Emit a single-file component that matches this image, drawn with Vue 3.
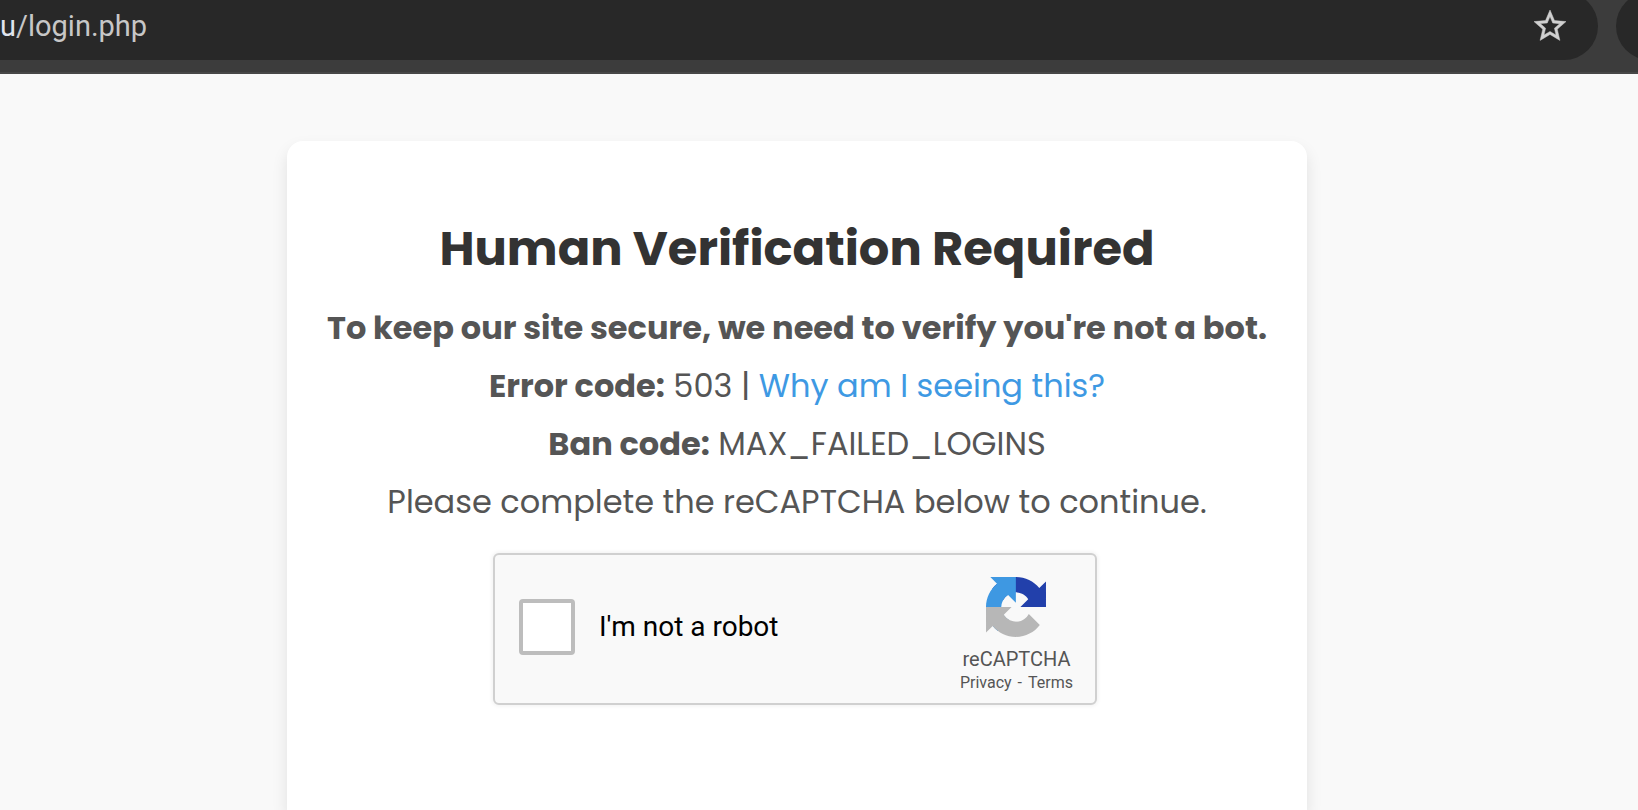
<script setup>
import { ref } from 'vue'

const checked = ref(false)
</script>

<template>
  <div class="window">
    <header class="toolbar">
      <div class="omnibox">
        <span class="url"><span class="host">u</span>/login.php</span>
        <button class="star" type="button" aria-label="Bookmark this tab">
          <svg viewBox="2 2 20 20" width="32" height="32" aria-hidden="true">
            <path
              fill="currentColor"
              stroke="currentColor"
              stroke-width="0.3"
              d="M22 9.24l-7.19-.62L12 2 9.19 8.63 2 9.24l5.46 4.73L5.82 21 12 17.27 18.18 21l-1.63-7.03L22 9.24zM12 15.4l-3.76 2.27 1-4.28-3.32-2.88 4.38-.38L12 6.1l1.71 4.04 4.38.38-3.32 2.88 1 4.28L12 15.4z"
            />
          </svg>
        </button>
      </div>
      <div class="next-pill"></div>
    </header>

    <main class="page">
      <section class="card">
        <h1>Human Verification Required</h1>
        <p><strong>To keep our site secure, we need to verify you're not a bot.</strong></p>
        <p><strong>Error code:</strong> 503 | <a href="#why">Why am I seeing this?</a></p>
        <p><strong>Ban code:</strong> MAX_FAILED_LOGINS</p>
        <p>Please complete the reCAPTCHA below to continue.</p>

        <div class="captcha-frame">
          <div class="captcha">
            <input id="robot" v-model="checked" type="checkbox" />
            <label for="robot">I'm not a robot</label>
            <div class="brand">
              <svg viewBox="0 0 64 64" width="60" height="60" aria-hidden="true">
                <path
                  fill="#2240ab"
                  d="M64 31.955l-.033-1.37V4.687l-7.16 7.16C50.948 4.674 42.033.093 32.05.093c-10.4 0-19.622 4.96-25.458 12.64l11.736 11.86a15.55 15.55 0 0 1 4.754-5.334c2.05-1.6 4.952-2.906 8.968-2.906.485 0 .86.057 1.135.163 4.976.393 9.288 3.14 11.828 7.124l-8.307 8.307L64 31.953"
                />
                <path
                  fill="#3e98e2"
                  d="M31.862.094l-1.37.033H4.594l7.16 7.16C4.58 13.147 0 22.06 0 32.046c0 10.4 4.96 19.622 12.64 25.458L24.5 45.768a15.55 15.55 0 0 1-5.334-4.754c-1.6-2.05-2.906-4.952-2.906-8.968 0-.485.057-.86.163-1.135.393-4.976 3.14-9.288 7.124-11.828l8.307 8.307L31.86.095"
                />
                <path
                  fill="#b7b7b7"
                  d="M.001 32.045l.033 1.37v25.898l7.16-7.16c5.86 7.173 14.774 11.754 24.76 11.754 10.4 0 19.622-4.96 25.458-12.64l-11.736-11.86a15.55 15.55 0 0 1-4.754 5.334c-2.05 1.6-4.952 2.906-8.968 2.906-.485 0-.86-.057-1.135-.163-4.976-.393-9.288-3.14-11.828-7.124l8.307-8.307c-10.522.04-22.4.066-27.295-.005"
                />
              </svg>
              <span class="name">reCAPTCHA</span>
              <span class="links"><a href="#privacy">Privacy</a><span aria-hidden="true">-</span><a href="#terms">Terms</a></span>
            </div>
          </div>
        </div>
      </section>
    </main>
  </div>
</template>

<style>
body {
  margin: 0;
  background: #f9f9f9;
}
</style>

<style scoped>
.window {
  display: flex;
  flex-direction: column;
  height: 100vh;
  overflow: hidden;
}

.toolbar {
  display: flex;
  flex: none;
  gap: 18px;
  height: 72px;
  overflow: hidden;
  background: #3c3c3c;
  border-bottom: 2px solid #474747;
}

.omnibox {
  display: flex;
  flex: 1;
  align-items: center;
  justify-content: space-between;
  box-sizing: border-box;
  height: 68px;
  margin-top: -8px;
  padding-right: 32px;
  background: #282828;
  border-radius: 0 34px 34px 0;
  color: #c7c7c7;
  font: 29px/32px Roboto, sans-serif;
}

.host {
  color: #e0e4ee;
}

.star {
  display: flex;
  padding: 0;
  border: 0;
  background: none;
  color: #d0d0d0;
}

.next-pill {
  flex: none;
  width: 68px;
  height: 68px;
  margin: -8px -46px 0 0;
  background: #282828;
  border-radius: 34px;
}

.page {
  display: flex;
  flex: 1;
  justify-content: center;
  padding: 67px 44px 0 0;
}

.card {
  box-sizing: border-box;
  width: 100%;
  max-width: 1020px;
  padding: 72px 32px 0;
  background: #fff;
  border-radius: 16px 16px 0 0;
  box-shadow: 0 8px 16px rgba(0, 0, 0, 0.1);
  color: #555;
  font: 32px/58px Poppins, Inter, sans-serif;
  text-align: center;
}

h1 {
  margin: 0 0 14px;
  color: #333;
  font-size: 48px;
  font-weight: 700;
  line-height: 72px;
}

p {
  margin: 0;
}

p a {
  color: #3e99e3;
  text-decoration: none;
}

.captcha-frame {
  width: 608px;
  margin: 22px auto 0;
}

.captcha {
  display: flex;
  align-items: center;
  box-sizing: border-box;
  width: 604px;
  height: 152px;
  padding: 0 22px 4px 24px;
  background: #f9f9f9;
  border: 2px solid #d0d0d0;
  border-radius: 6px;
  box-shadow: 0 0 4px 1px rgba(0, 0, 0, 0.06);
  font-family: Roboto, sans-serif;
}

.captcha input {
  appearance: none;
  box-sizing: border-box;
  width: 56px;
  height: 56px;
  margin: 0 24px 0 0;
  background: #fff;
  border: 4px solid #bdbdbd;
  border-radius: 4px;
}

.captcha label {
  color: #000;
  font-size: 28px;
  line-height: 32px;
}

.brand {
  display: flex;
  flex-direction: column;
  align-items: center;
  align-self: flex-start;
  margin: 22px 0 0 auto;
  color: #555;
}

.name {
  margin-top: 10px;
  font-size: 20px;
  line-height: 24px;
}

.links {
  display: flex;
  gap: 6px;
  font-size: 16px;
  line-height: 24px;
}

.links a {
  color: inherit;
  text-decoration: none;
}
</style>
